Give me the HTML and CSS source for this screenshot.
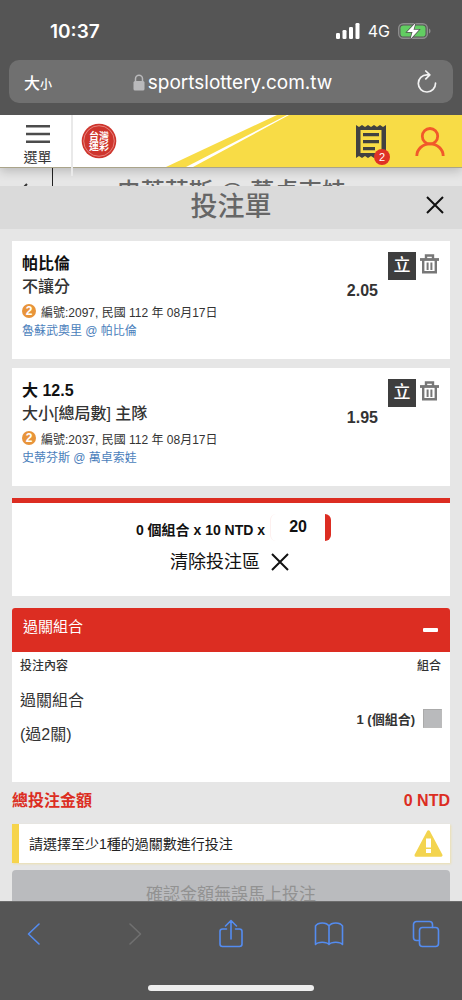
FILE: index.html
```html
<!DOCTYPE html>
<html lang="zh-Hant">
<head>
<meta charset="utf-8">
<meta name="viewport" content="width=device-width, initial-scale=1">
<title>投注單</title>
<link rel="stylesheet" href="styles.css">
</head>
<body>
<header class="browser-top">
  <div class="status">
    <span class="clock">10:37</span>
    <span class="status-right">
      <svg width="24" height="16" viewBox="0 0 24 16" fill="#fff"><rect x="0" y="10" width="4" height="6" rx="1.3"/><rect x="6.5" y="7" width="4" height="9" rx="1.3"/><rect x="13" y="4" width="4" height="12" rx="1.3"/><rect x="19.5" y="0" width="4" height="16" rx="1.3"/></svg>
      <span class="network">4G</span>
      <svg width="33" height="18" viewBox="0 0 33 18"><rect x=".7" y="1.700" width="28.600" height="14.600" rx="4.500" fill="none" stroke="#8d8d8d" stroke-width="1.400"/><rect x="2.500" y="3.500" width="25" height="11" rx="2.800" fill="#62cd62"/><path d="M31 6.500c2 .8 2 4.200 0 5z" fill="#8d8d8d"/><path d="M17.500 1 9 10h5.500L12.500 17 21 7.800h-5.500z" fill="#fff" stroke="#555" stroke-width="1.500" paint-order="stroke"/></svg>
    </span>
  </div>
  <div class="address">
    <button class="text-size" type="button">大<small>小</small></button>
    <span class="domain">
      <svg width="12" height="17" viewBox="0 0 12 17"><path d="M2.500 8V4.800a3.500 3.500 0 0 1 7 0V8" fill="none" stroke="#b9b9bb" stroke-width="1.500"/><rect x=".5" y="7" width="11" height="9.500" rx="1.600" fill="#b9b9bb"/></svg>
      sportslottery.com.tw
    </span>
    <button class="reload" type="button" aria-label="重新載入"><svg width="20" height="24" viewBox="0 0 20 24" fill="none" stroke="#f2f2f2" stroke-width="1.700" stroke-linecap="round" stroke-linejoin="round"><path d="M18.500 13.200a8.600 8.600 0 1 1-8.600-8.400h2M8.800 1l4 3.900-4 4"/></svg></button>
  </div>
</header>

<main class="page">
  <nav class="site-nav">
    <button class="menu" type="button"><svg width="24" height="18" viewBox="0 0 24 18" fill="#4c4c4c"><path d="M0 0h24v2.600H0zM0 7.700h24v2.600H0zM0 15.400h24V18H0z"/></svg>選單</button>
    <a class="logo" href="#" aria-label="台灣運彩"><svg width="36" height="36" viewBox="0 0 36 36"><circle cx="18" cy="18" r="17.300" fill="#ce352d"/><circle cx="18" cy="18" r="15.300" fill="none" stroke="#f0a59f" stroke-width=".7"/><g class="seal"><text x="8" y="17">台灣</text><text x="8" y="27">運彩</text></g></svg></a>
    <svg class="slope" width="124" height="52" viewBox="0 0 124 52"><path d="M0 52 111 0h13v52z" fill="#f8dc46"/><path d="M20 52h7L123 0h-2z" fill="#fff"/></svg>
    <div class="nav-actions">
      <button class="slip" type="button" aria-label="投注單"><svg width="30" height="34" viewBox="0 0 30 34"><path d="M0 0l3 2 3-2 3 2 3-2 3 2 3-2 3 2 3-2 3 2 3-2v33l-3-2-3 2-3-2-3 2-3-2-3 2-3-2-3 2-3-2-3 2z" fill="#414141"/><path d="M4.500 5h21v23h-21z" fill="#f8dc46"/><path d="M7 8h16v3.300H7zM7 15h16v3.300H7zM7 22h12v3.300H7z" fill="#414141"/></svg><span class="badge">2</span></button>
      <button class="user" type="button" aria-label="會員"><svg width="30" height="29" viewBox="0 0 30 29" fill="none" stroke="#f1592a" stroke-width="2.800"><circle cx="15" cy="9.200" r="7.700"/><path d="M1.800 29a13.200 12.200 0 0 1 26.400 0"/></svg></button>
    </div>
  </nav>
  <div class="match-strip"><span class="back"><svg width="8" height="12" viewBox="0 0 8 12" fill="none" stroke="#333" stroke-width="2"><path d="M7 1 2 6l5 5"/></svg></span><span class="match-name">史蒂芬斯 @ 萬卓索娃</span></div>

  <section class="sheet">
    <div class="sheet-head"><h1>投注單</h1><button class="close" type="button" aria-label="關閉"><svg width="18" height="18" viewBox="0 0 18 18" stroke="#111" stroke-width="2"><path d="M1 1l16 16M17 1 1 17"/></svg></button></div>
    <div class="content">
      <article class="bet">
        <div class="bet-info">
          <h2>帕比倫</h2>
          <p class="market">不讓分</p>
          <p class="meta"><span class="sport">2</span>編號:2097, 民國 112 年 08月17日</p>
          <a href="#">魯蘇武奧里 @ 帕比倫</a>
        </div>
        <strong class="odds">2.05</strong>
        <div class="bet-tools"><button class="single" type="button">立</button><button class="trash" type="button" aria-label="刪除"><svg width="19" height="20" viewBox="0 0 19 20" fill="none" stroke="#777"><path d="M0 5.500h19" stroke-width="2.800"/><path d="M6 5V1.500h7V5" stroke-width="2.400"/><path d="M3.200 6v12.300h12.600V6" stroke-width="2.400"/><path d="M7.600 8.500V16M11.400 8.500V16" stroke-width="2"/></svg></button></div>
      </article>
      <article class="bet">
        <div class="bet-info">
          <h2>大 12.5</h2>
          <p class="market">大小[總局數] 主隊</p>
          <p class="meta"><span class="sport">2</span>編號:2037, 民國 112 年 08月17日</p>
          <a href="#">史蒂芬斯 @ 萬卓索娃</a>
        </div>
        <strong class="odds">1.95</strong>
        <div class="bet-tools"><button class="single" type="button">立</button><button class="trash" type="button" aria-label="刪除"><svg width="19" height="20" viewBox="0 0 19 20" fill="none" stroke="#777"><path d="M0 5.500h19" stroke-width="2.800"/><path d="M6 5V1.500h7V5" stroke-width="2.400"/><path d="M3.200 6v12.300h12.600V6" stroke-width="2.400"/><path d="M7.600 8.500V16M11.400 8.500V16" stroke-width="2"/></svg></button></div>
      </article>

      <section class="stake">
        <div class="stake-row"><label for="stake">0 個組合 x 10 NTD x</label><input id="stake" type="text" value="20" inputmode="numeric"></div>
        <button class="clear" type="button">清除投注區<svg width="18" height="18" viewBox="0 0 18 18" stroke="#111" stroke-width="2"><path d="M1 1l16 16M17 1 1 17"/></svg></button>
      </section>

      <section class="combo">
        <button class="combo-head" type="button">過關組合<span class="minus"></span></button>
        <div class="combo-labels"><span>投注內容</span><span>組合</span></div>
        <div class="combo-row">
          <div class="combo-name">過關組合<br>(過2關)</div>
          <label class="combo-pick">1 (個組合)<input type="checkbox"></label>
        </div>
      </section>

      <div class="total"><span>總投注金額</span><span>0 NTD</span></div>
      <div class="alert"><span>請選擇至少1種的過關數進行投注</span><svg width="29" height="27" viewBox="0 0 29 27"><path d="M14.500 1.800 27 25.200H2z" fill="#f3d44f" stroke="#f3d44f" stroke-width="3" stroke-linejoin="round"/><path d="M12 8.500h5v9h-5zM12 19h5v4h-5z" fill="#fff"/></svg></div>
      <button class="confirm" type="button" disabled>確認金額無誤馬上投注</button>
    </div>
  </section>
</main>

<footer class="browser-bottom">
  <div class="toolbar">
    <button type="button" aria-label="上一頁"><svg width="28" height="28" viewBox="0 0 28 28"><path d="M19 4 8.500 14 19 24"/></svg></button>
    <button class="off" type="button" aria-label="下一頁"><svg width="28" height="28" viewBox="0 0 28 28"><path d="M9 4l10.500 10L9 24"/></svg></button>
    <button type="button" aria-label="分享"><svg width="28" height="30" viewBox="0 0 28 30"><path d="M9.500 10H5.500a2.500 2.500 0 0 0-2.500 2.500V25a2.500 2.500 0 0 0 2.500 2.500h17A2.500 2.500 0 0 0 25 25V12.500a2.500 2.500 0 0 0-2.500-2.500h-4M14 20V2M8.500 7 14 1.500 19.500 7"/></svg></button>
    <button type="button" aria-label="書籤"><svg width="30" height="28" viewBox="0 0 30 28"><path d="M15 6v18.500M15 6C12.500 2 4 2 1.500 6v18.500C4 21.500 12.500 21.500 15 24.500 17.500 21.500 26 21.500 28.500 24.500V6C26 2 17.500 2 15 6z"/></svg></button>
    <button type="button" aria-label="分頁"><svg width="28" height="28" viewBox="0 0 28 28"><path d="M7.500 20.500H4.500a3 3 0 0 1-3-3V4.500a3 3 0 0 1 3-3h13a3 3 0 0 1 3 3v3"/><rect x="7.500" y="7.500" width="19" height="19" rx="3"/></svg></button>
  </div>
  <div class="home-bar"></div>
</footer>
</body>
</html>
```

FILE: styles.css
```css
* { box-sizing: border-box; }
body {
  margin: 0;
  height: 100vh;
  display: flex;
  flex-direction: column;
  overflow: hidden;
  background: #555;
  color: #333;
  font-family: "Liberation Sans", "Noto Sans CJK TC", sans-serif;
  font-size: 16px;
}
button {
  border: 0;
  padding: 0;
  background: none;
  color: inherit;
  font: inherit;
}
svg { display: block; flex: none; }
h1, h2, p { margin: 0; }

.browser-top {
  flex: none;
  padding: 0 9px 12px;
  color: #fff;
  font-family: Inter, "Noto Sans CJK TC", sans-serif;
}
.status {
  height: 60px;
  padding: 2px 22px 0 41px;
  display: flex;
  align-items: center;
  justify-content: space-between;
}
.clock { font-size: 19px; font-weight: 600; }
.status-right { display: flex; align-items: center; gap: 8px; }
.network { font-size: 16px; }
.address {
  height: 43px;
  padding: 0 16px 0 15px;
  border-radius: 10px;
  background: #707070;
  display: flex;
  align-items: center;
  justify-content: space-between;
}
.text-size { font-size: 16px; font-weight: 500; }
.text-size small { font-size: 12px; }
.domain {
  display: flex;
  align-items: center;
  gap: 3px;
  padding: 1px 4px 0 0;
  font-size: 19px;
}

.page {
  flex: 1;
  min-height: 0;
  overflow: hidden;
  background: #e6e6e6;
}
.site-nav {
  position: relative;
  z-index: 1;
  height: 53px;
  display: flex;
  background: #fff;
  border-bottom: 1px solid #aaa48a;
  box-shadow: 0 3px 10px rgba(0, 0, 0, .2);
}
.menu {
  width: 73px;
  height: 61px;
  flex: none;
  padding: 10px 0 0 4px;
  border-right: 2px solid #e9e9e9;
  display: flex;
  flex-direction: column;
  align-items: center;
  gap: 5px;
  font-size: 14px;
  line-height: 18px;
}
.logo { width: 93px; padding: 8px 0 0 8px; flex: none; }
.seal { fill: #fff; font: 700 10px "Noto Sans CJK TC", sans-serif; }
.nav-actions {
  flex: 1;
  padding: 10px 17px 0 0;
  display: flex;
  align-items: flex-start;
  justify-content: flex-end;
  gap: 29px;
  background: #f8dc46;
}
.slip { position: relative; }
.user { padding-top: 2px; }
.badge {
  position: absolute;
  right: -4px;
  bottom: -6px;
  width: 16px;
  height: 16px;
  border-radius: 50%;
  background: #df3226;
  color: #fff;
  font-size: 11px;
  line-height: 16px;
}
.match-strip {
  height: 18px;
  overflow: hidden;
  display: flex;
  align-items: flex-start;
}
.back {
  width: 53px;
  height: 18px;
  padding: 15px 0 0 20px;
  border-right: 1px solid #222;
}
.match-name {
  flex: 1;
  padding: 11px 52px 0 0;
  color: #666;
  font-size: 24px;
  font-weight: 500;
  line-height: 26px;
  text-align: center;
}

.sheet-head {
  position: relative;
  height: 43px;
  background: #dadada;
  text-align: center;
}
.sheet-head h1 {
  color: #666;
  font-size: 27px;
  font-weight: 500;
  line-height: 42px;
}
.close { position: absolute; top: 10px; right: 18px; }
.content { padding: 12px; display: flex; flex-direction: column; }

.bet {
  height: 118px;
  margin-bottom: 9px;
  padding: 11px 11px 0 10px;
  display: flex;
  align-items: flex-start;
  background: #fff;
}
.bet-info { flex: 1; }
.bet h2 { color: #111; font-size: 16px; font-weight: 700; line-height: 23px; }
.market { font-size: 16px; font-weight: 500; line-height: 23px; }
.meta {
  display: flex;
  align-items: center;
  gap: 5px;
  padding-top: 5px;
  font-size: 12px;
  line-height: 20px;
}
.sport {
  width: 14px;
  height: 14px;
  margin-bottom: 4px;
  border-radius: 50%;
  background: #e8943a;
  color: #fff;
  font-size: 12px;
  font-weight: 700;
  line-height: 14px;
  text-align: center;
}
.bet a {
  display: block;
  color: #4a7ebb;
  font-size: 12px;
  line-height: 16px;
  text-decoration: none;
}
.odds { padding-top: 30px; margin-right: 10px; font-size: 16px; line-height: 18px; }
.bet-tools { display: flex; gap: 4px; }
.single {
  width: 28px;
  height: 28px;
  background: #3e3e3e;
  color: #fff;
  font-size: 17px;
  font-weight: 500;
  line-height: 28px;
}
.trash { align-self: flex-start; padding-top: 2px; }

.stake {
  margin-top: 3px;
  height: 98px;
  padding-top: 11px;
  border-top: 5px solid #dc2d22;
  background: #fff;
  display: flex;
  flex-direction: column;
  align-items: center;
  gap: 8px;
  color: #111;
}
.stake-row {
  display: flex;
  align-items: center;
  gap: 5px;
  padding-left: 5px;
  font-size: 14px;
  font-weight: 700;
}
.stake-row label { padding-top: 2px; }
.stake-row input {
  width: 61px;
  height: 27px;
  padding: 0 0 2px;
  border: 0 solid #fff;
  border-right: 6px solid #dc2d22;
  border-left: 1px solid #fdf0ef;
  border-radius: 6px;
  background: #fff;
  color: #111;
  font: 700 16px "Liberation Sans", sans-serif;
  text-align: center;
}
.clear {
  display: flex;
  align-items: center;
  gap: 11px;
  padding-right: 3px;
  font-size: 18px;
  line-height: 26px;
}

.combo { height: 174px; margin-top: 12px; background: #fff; border-radius: 3px 3px 0 0; }
.combo-head {
  width: 100%;
  height: 44px;
  padding: 0 12px 10px 11px;
  border-radius: 3px 3px 0 0;
  background: #dc2d22;
  color: #fff;
  display: flex;
  align-items: center;
  justify-content: space-between;
  font-size: 15px;
}
.minus { width: 15px; height: 4px; margin-top: 10px; border-radius: 1px; background: #fff; }
.combo-labels {
  display: flex;
  justify-content: space-between;
  padding: 5px 9px 0 8px;
  font-size: 12px;
  font-weight: 500;
  line-height: 18px;
}
.combo-row {
  display: flex;
  align-items: center;
  justify-content: space-between;
  padding: 9px 8px 0;
}
.combo-name { font-size: 16px; line-height: 34px; }
.combo-pick {
  display: flex;
  align-items: center;
  gap: 8px;
  font-size: 13px;
  font-weight: 700;
}
.combo-pick input {
  appearance: none;
  width: 19px;
  height: 19px;
  margin: 0;
  border: 1px solid #aaa;
  border-right-color: #bbb;
  border-bottom-color: #bbb;
  background: #b9babc;
}

.total {
  display: flex;
  justify-content: space-between;
  margin: 7px 0 11px;
  color: #dc2d22;
  font-size: 16px;
  font-weight: 700;
  line-height: 24px;
}
.alert {
  height: 39px;
  padding: 0 7px 0 10px;
  border-left: 7px solid #f6d44c;
  background: #fff;
  box-shadow: 1px 1px 2px #ecdfae;
  display: flex;
  align-items: center;
  justify-content: space-between;
  color: #222;
  font-size: 14px;
}
.alert span { padding-bottom: 2px; }
.confirm {
  height: 48px;
  margin-top: 7px;
  padding-bottom: 4px;
  border-radius: 4px;
  background: #babbbe;
  color: #929292;
  font-size: 17px;
}

.browser-bottom {
  flex: none;
  height: 99px;
  border-top: 1px solid #6c6c6c;
  background: #555;
}
.toolbar {
  display: flex;
  justify-content: space-between;
  align-items: center;
  padding: 16px 22px 0 20px;
  height: 48px;
}
.toolbar > :nth-child(2) { margin-left: 4px; }
.toolbar svg {
  fill: none;
  stroke: #548cf0;
  stroke-width: 1.6px;
  stroke-linecap: round;
  stroke-linejoin: round;
}
.toolbar .off svg { stroke: #707070; }
.home-bar {
  width: 36%;
  height: 6px;
  margin: 35px auto 0;
  border-radius: 3px;
  background: #eee;
}
```
